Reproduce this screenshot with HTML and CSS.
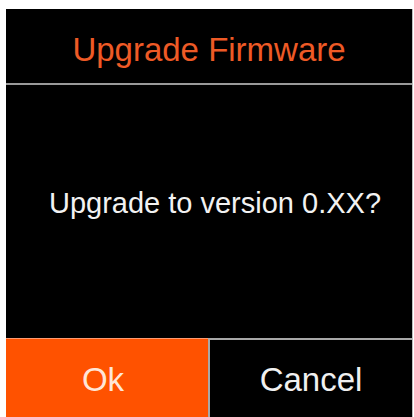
FILE: index.html
```html
<!DOCTYPE html>
<html>
<head>
<meta charset="utf-8">
<link rel="stylesheet" href="styles.css">
</head>
<body>
<div class="screen">
  <div class="header">Upgrade Firmware</div>
  <div class="message">Upgrade to version 0.XX?</div>
  <div class="actions">
    <div class="btn ok">Ok</div>
    <div class="btn cancel">Cancel</div>
  </div>
</div>
</body>
</html>
```
FILE: styles.css
```css
html, body {
  margin: 0;
  padding: 0;
  background: #ffffff;
  width: 414px;
  height: 417px;
  overflow: hidden;
}
.screen {
  margin: 9px 0 0 6px;
  width: 406px;
  height: 420px;
  background: #000;
  display: flex;
  flex-direction: column;
  font-family: "Liberation Sans", Arial, sans-serif;
  border-right: 1px solid #bdbdbd;
}
.header {
  height: 76px;
  border-bottom: 2px solid #9a9a9a;
  color: #ee5a26;
  font-size: 33px;
  display: flex;
  align-items: center;
  justify-content: center;
  padding-top: 8px;
  box-sizing: border-box;
}
.message {
  height: 253px;
  color: #f2f2f2;
  font-size: 29px;
  display: flex;
  align-items: center;
  justify-content: center;
  padding: 0 0 16px 12px;
  box-sizing: border-box;
}
.actions {
  display: flex;
  height: 80px;
}
.btn {
  display: flex;
  justify-content: center;
  padding-top: 22px;
  font-size: 33px;
  box-sizing: border-box;
}
.ok {
  width: 202px;
  background: #ff5200;
  color: #ffe6d8;
  border-top: 1px solid #ff9a70;
  padding-right: 8px;
}
.cancel {
  flex: 1;
  background: #000;
  color: #f0f0f0;
  border-top: 2px solid #a8a8a8;
  border-left: 2px solid #a8a8a8;
  padding-top: 21px;
}
```
